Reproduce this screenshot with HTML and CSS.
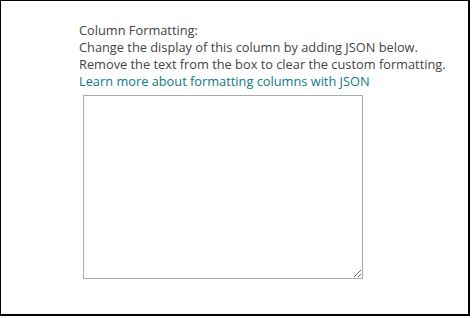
FILE: index.html
```html
<!DOCTYPE html>
<html lang="en">
<head>
    <meta charset="UTF-8">
    <title>Column Formatting</title>
    <link rel="stylesheet" href="styles.css">
</head>
<body>
    <div class="frame">
        <div class="format-panel">
            <p class="format-label">Column Formatting:</p>
            <p class="format-help">Change the display of this column by adding JSON below.</p>
            <p class="format-help">Remove the text from the box to clear the custom formatting.</p>
            <a class="format-link" href="#">Learn more about formatting columns with JSON</a>
            <textarea class="format-box"></textarea>
        </div>
    </div>
</body>
</html>
```

FILE: styles.css
```css
body {
    margin: 0;
    background-color: white;
    font-family: 'Open Sans', sans-serif;
}

.frame {
    width: 470px;
    height: 316px;
    box-sizing: border-box;
    border: 2px solid #000;
    border-top-width: 1px;
    border-left-width: 1px;
    padding: 21px 0 0 78px;
}

.format-panel {
    display: flex;
    flex-direction: column;
    align-items: flex-start;
    font-size: 12.8px;
    line-height: 17px;
    color: #444;
}

.format-panel p {
    margin: 0;
}

.format-link {
    color: #0f7a84;
    text-decoration: none;
}

.format-box {
    margin: 5px 0 0 4px;
    width: 280px;
    height: 184px;
    box-sizing: border-box;
    border: 1px solid #ababab;
    border-radius: 0;
    padding: 4px;
    resize: both;
    font-family: 'Open Sans', sans-serif;
}
```
